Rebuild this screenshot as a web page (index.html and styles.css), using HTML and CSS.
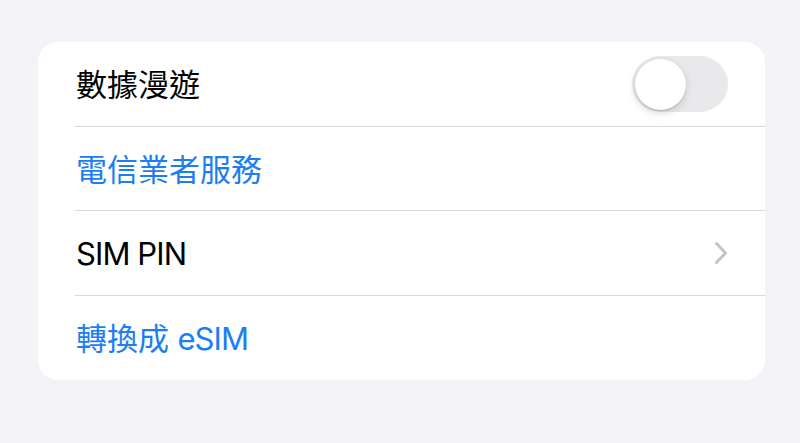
FILE: index.html
```html
<!DOCTYPE html>
<html lang="zh-Hant">
<head>
<meta charset="utf-8">
<title>行動服務</title>
<link rel="stylesheet" href="styles.css">
</head>
<body>
<div class="page">
  <ul class="group">
    <li class="row">
      <span class="label"><span class="han">數據漫遊</span></span>
      <span class="switch" role="switch" aria-checked="false"><span class="knob"></span></span>
    </li>
    <li class="row">
      <span class="label link"><span class="han">電信業者服務</span></span>
    </li>
    <li class="row">
      <span class="label"><span class="latin">SIM PIN</span></span>
      <svg class="chevron" width="14" height="24" viewBox="0 0 14 24" aria-hidden="true">
        <path d="M2.5 2.5 L11.5 12 L2.5 21.5" fill="none" stroke="#c4c4c7" stroke-width="3" stroke-linecap="round" stroke-linejoin="round"/>
      </svg>
    </li>
    <li class="row">
      <span class="label link"><span class="han">轉換成</span> <span class="latin">eSIM</span></span>
    </li>
  </ul>
</div>
</body>
</html>
```
FILE: styles.css
```css
html, body {
  margin: 0;
  padding: 0;
  background: #f2f2f7;
}

body {
  font-family: Inter, "Noto Sans CJK TC", sans-serif;
  -webkit-font-smoothing: antialiased;
}

.page {
  padding: 42px 35px 0 38px;
}

.group {
  list-style: none;
  margin: 0;
  padding: 0;
  background: #ffffff;
  border-radius: 20px;
  overflow: hidden;
}

.row {
  position: relative;
  height: 84.5px;
  display: flex;
  align-items: center;
  justify-content: space-between;
  padding: 0 37px 0 38px;
}

.row + .row::before {
  content: "";
  position: absolute;
  top: -1px;
  left: 37px;
  right: 0;
  height: 1px;
  background: #d9d9dd;
}

.label {
  font-size: 30px;
  color: #000000;
  line-height: 40px;
  padding-top: 2px;
}

.han {
  font-size: 31px;
}

.latin {
  font-size: 31px;
  letter-spacing: -0.9px;
}

.link {
  color: #1c7ef2;
}

.switch {
  width: 96px;
  height: 56px;
  border-radius: 28px;
  background: #e9e9eb;
  display: flex;
  align-items: center;
  padding: 0 3px;
  box-sizing: border-box;
}

.knob {
  width: 51px;
  height: 51px;
  border-radius: 50%;
  background: #ffffff;
  box-shadow: 0 3px 8px rgba(0, 0, 0, 0.15), 0 1px 1px rgba(0, 0, 0, 0.16);
}

.chevron {
  display: block;
}
```
